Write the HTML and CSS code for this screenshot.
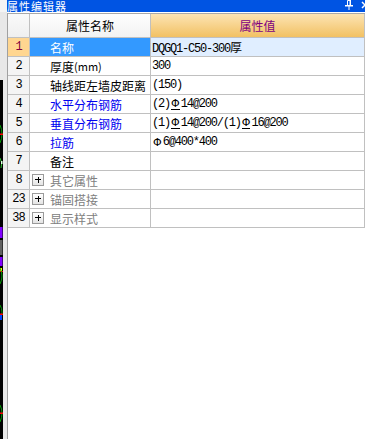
FILE: index.html
```html
<!DOCTYPE html>
<html lang="zh-CN">
<head>
    <meta charset="UTF-8">
    <title>属性编辑器</title>
    <link rel="stylesheet" href="styles.css">
</head>
<body>
    <div class="screen">
        <!-- 左侧露出的绘图区边缘 -->
        <div class="canvas-edge">
            <svg width="7" height="439" viewBox="0 0 7 439">
                <rect x="0" y="0" width="7" height="12" fill="#F4F4F4"/>
                <rect x="0" y="12" width="7" height="427" fill="#E8E8E8"/>
                <rect x="0" y="80" width="3" height="359" fill="#000"/>
                <path d="M0 125 Q4 134 0 143" stroke="#00A000" fill="none"/>
                <rect x="0" y="133.5" width="3" height="1.5" fill="#FF0000"/>
                <path d="M0 158 Q3 163 1 168" stroke="#30C030" fill="none"/>
                <rect x="1" y="161" width="1.5" height="3" fill="#E0FFE0"/>
                <rect x="0" y="227" width="2.5" height="11" fill="#8000FF"/>
                <rect x="0" y="240" width="2.5" height="15" fill="#606060"/>
                <rect x="0" y="257" width="2.5" height="9" fill="#8000FF"/>
                <rect x="0" y="268" width="2" height="3" fill="#FFFF00"/>
                <rect x="0" y="271" width="3" height="1" fill="#FF0000"/>
                <path d="M0 268 Q4 276 0 284" stroke="#00A000" fill="none"/>
                <path d="M0 305 Q4 312 0 320" stroke="#00A000" fill="none"/>
                <rect x="0" y="313.5" width="3" height="1.5" fill="#FF0000"/>
                <rect x="0" y="315" width="2" height="5" fill="#0040FF"/>
                <path d="M0 405 Q4 413 0 422" stroke="#00A000" fill="none"/>
                <rect x="0" y="412.5" width="3" height="1.5" fill="#FF0000"/>
            </svg>
        </div>

        <div class="editor">
            <div class="titlebar">
                <span class="title">属性编辑器</span>
                <svg class="pin" width="8" height="10" viewBox="0 0 8 10">
                    <path d="M2.5 0.5 H5.5 V5.5 H2.5 Z" stroke="#fff" fill="none"/>
                    <rect x="4.5" y="0" width="1.5" height="6" fill="#fff"/>
                    <rect x="0" y="5" width="8" height="1.5" fill="#fff"/>
                    <rect x="3.5" y="6" width="1" height="4" fill="#fff"/>
                </svg>
                <svg class="close" width="8" height="10" viewBox="0 0 8 10">
                    <path d="M1 2 L7 8 M7 2 L1 8" stroke="#fff" stroke-width="1.5"/>
                </svg>
            </div>

            <div class="pane">
                <div class="grid">
                    <div class="row head">
                        <div class="cell num"></div>
                        <div class="cell name">属性名称</div>
                        <div class="cell value">属性值</div>
                    </div>
                    <div class="row selected">
                        <div class="cell num">1</div>
                        <div class="cell name">名称</div>
                        <div class="cell value">DQGQ1-C50-300厚</div>
                    </div>
                    <div class="row">
                        <div class="cell num">2</div>
                        <div class="cell name">厚度<span class="unit">(mm)</span></div>
                        <div class="cell value">300</div>
                    </div>
                    <div class="row">
                        <div class="cell num">3</div>
                        <div class="cell name">轴线距左墙皮距离</div>
                        <div class="cell value">(150)</div>
                    </div>
                    <div class="row">
                        <div class="cell num">4</div>
                        <div class="cell name link">水平分布钢筋</div>
                        <div class="cell value">(2)<span class="bar">Φ</span>14@200</div>
                    </div>
                    <div class="row">
                        <div class="cell num">5</div>
                        <div class="cell name link">垂直分布钢筋</div>
                        <div class="cell value">(1)<span class="bar">Φ</span>14@200/(1)<span class="bar">Φ</span>16@200</div>
                    </div>
                    <div class="row">
                        <div class="cell num">6</div>
                        <div class="cell name link">拉筋</div>
                        <div class="cell value"><span class="phi">Φ</span>6@400*400</div>
                    </div>
                    <div class="row">
                        <div class="cell num">7</div>
                        <div class="cell name">备注</div>
                        <div class="cell value"></div>
                    </div>
                    <div class="row group">
                        <div class="cell num">8</div>
                        <div class="cell name"><span class="toggle"></span>其它属性</div>
                        <div class="cell value"></div>
                    </div>
                    <div class="row group">
                        <div class="cell num">23</div>
                        <div class="cell name"><span class="toggle"></span>锚固搭接</div>
                        <div class="cell value"></div>
                    </div>
                    <div class="row group">
                        <div class="cell num">38</div>
                        <div class="cell name"><span class="toggle"></span>显示样式</div>
                        <div class="cell value"></div>
                    </div>
                </div>
            </div>
        </div>
    </div>
</body>
</html>
```

FILE: styles.css
```css
:root {
    --title-blue: #0054E3;
    --grid-line: #C0C0C0;
    --num-bg: #F4F4F4;
    --sel-num: #FFD690;
    --sel-name: #3399FF;
    --sel-value: #E0EEFF;
    --link-blue: #0000F0;
    --muted: #808080;
}

* {
    margin: 0;
    padding: 0;
    box-sizing: border-box;
}

body {
    width: 365px;
    height: 439px;
    overflow: hidden;
    background: #fff;
    font-family: "Noto Sans CJK SC", "Liberation Sans", sans-serif;
    font-size: 12px;
    color: #000;
}

.screen {
    display: flex;
    height: 439px;
}

.canvas-edge {
    width: 7px;
    flex: none;
}

.canvas-edge svg {
    display: block;
}

.editor {
    flex: 1;
    display: flex;
    flex-direction: column;
    min-width: 0;
}

/* 标题栏 */
.titlebar {
    height: 13px;
    flex: none;
    display: flex;
    align-items: center;
    background: var(--title-blue);
    border-bottom: 1px solid #fff;
    color: #fff;
}

.title {
    font-size: 11px;
    line-height: 12px;
    letter-spacing: 1px;
}

.pin {
    margin-left: auto;
    align-self: flex-start;
    flex: none;
}

.close {
    margin-left: 8px;
    margin-right: -4px;
    align-self: flex-start;
    flex: none;
}

.pane {
    flex: 1;
    border-left: 1px solid #A0A0A0;
}

.grid {
    border-top: 1px solid #A8A8A8;
}

.row {
    display: grid;
    grid-template-columns: 22px 121px 1fr;
    height: 19px;
}

.cell {
    display: flex;
    align-items: center;
    border-right: 1px solid var(--grid-line);
    border-bottom: 1px solid var(--grid-line);
    white-space: nowrap;
    overflow: hidden;
}

.num {
    justify-content: center;
    background: var(--num-bg);
    font-family: "Liberation Mono", monospace;
    font-size: 12px;
    letter-spacing: -1px;
}

.name {
    padding-left: 20px;
}

.value {
    padding-left: 1px;
    font-family: "Liberation Mono", "Noto Sans CJK SC", monospace;
    font-size: 12px;
    letter-spacing: -1.2px;
}

.unit {
    font-size: 11px;
}

/* 表头 */
.head {
    height: 24px;
}

.head .cell {
    justify-content: center;
    padding-left: 0;
    font-family: "Noto Sans CJK SC", sans-serif;
    letter-spacing: 0;
}

.head .num {
    background: linear-gradient(#FAFAFA, #EFEFEF);
}

.head .name {
    background: linear-gradient(#FEFEFE, #F2F2F2);
}

.head .value {
    background: linear-gradient(#FCE4B4, #F2C163);
    color: #800080;
}

/* 选中行 */
.selected .num {
    background: var(--sel-num);
    color: #800040;
}

.selected .name {
    background: var(--sel-name);
    color: #fff;
}

.selected .value {
    background: var(--sel-value);
}

.link {
    color: var(--link-blue);
}

.phi,
.bar {
    font-family: "DejaVu Sans", sans-serif;
    font-size: 11px;
    letter-spacing: 0;
    margin: 0 1px;
}

.bar {
    display: inline-block;
    line-height: 10px;
    border-bottom: 1px solid #000;
}

/* 折叠组 */
.group .name {
    padding-left: 2px;
    color: var(--muted);
}

.toggle {
    position: relative;
    width: 12px;
    height: 12px;
    margin-right: 6px;
    border: 1px solid #9A9A9A;
    background: linear-gradient(#FFFFFF, #E4E4E4);
    flex: none;
}

.toggle::before,
.toggle::after {
    content: '';
    position: absolute;
    background: #000;
}

.toggle::before {
    left: 2px;
    top: 4px;
    width: 6px;
    height: 1px;
}

.toggle::after {
    left: 4.5px;
    top: 1.5px;
    width: 1px;
    height: 6px;
}
```
